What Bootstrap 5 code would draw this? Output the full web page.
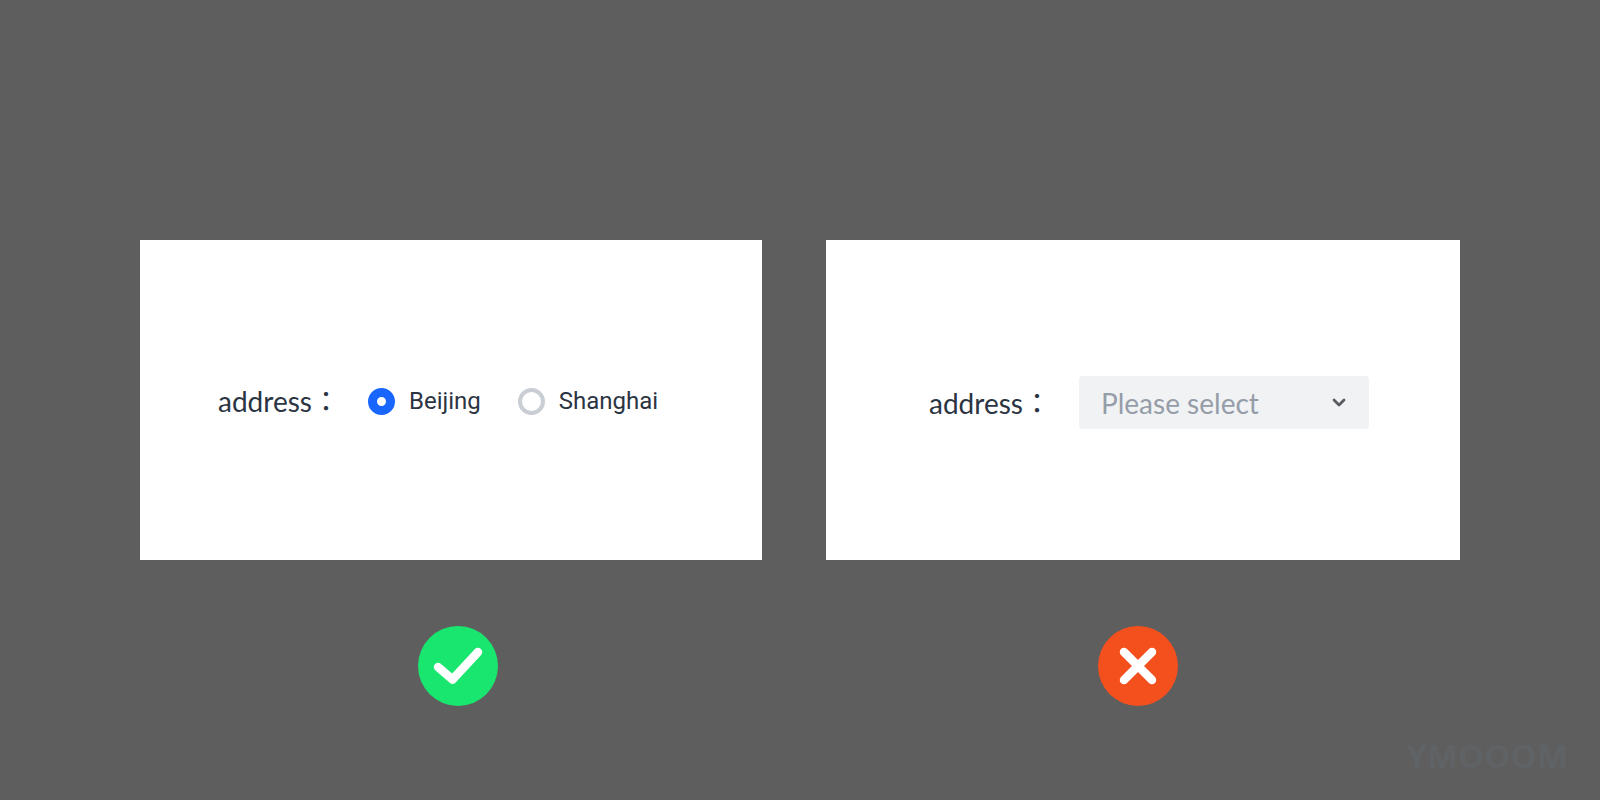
<!DOCTYPE html>
<html lang="en">
<head>
<meta charset="utf-8">
<meta name="viewport" content="width=device-width, initial-scale=1">
<title>Address field: radio or select</title>
<link href="https://cdn.jsdelivr.net/npm/bootstrap@5.3.0/dist/css/bootstrap.min.css" rel="stylesheet">
<style>
  body { background: #5e5e5e; color: #2b3442; font-family: "Open Sans", "Noto Sans CJK JP", sans-serif; }
  .compare { display: grid; grid-template-columns: 622fr 634fr; gap: 64px; padding: 240px 140px 0; }
  .panel { height: 320px; padding-top: 2px; }
  .panel-do { padding-left: 78px; }
  .panel-dont { padding-left: 103px; padding-top: 5px; }
  .field-label { width: 150px; font-family: Lato, "Noto Sans CJK JP", sans-serif; font-size: 28px; line-height: 40px; white-space: nowrap; }
  .choice { gap: 14px; margin-right: 37px; font-family: Roboto, sans-serif; font-size: 24px; line-height: 32px; }
  .choice .form-check-input { width: 27px; height: 27px; border: 4px solid #c9cdd4; box-shadow: none; }
  .choice .form-check-input:checked { border: 9px solid #1966ff; background: #fff; }
  .city-select { width: 290px; height: 53px; padding: 0 48px 0 22px; border: 0; border-radius: 4px; color: #959da8; font-family: Lato, sans-serif; font-size: 28px;
    background: #f1f2f4 url("data:image/svg+xml,%3Csvg xmlns='http://www.w3.org/2000/svg' viewBox='0 0 14 10'%3E%3Cpath d='M2 2l5 5 5-5' fill='none' stroke='%23575a5e' stroke-width='2.8' stroke-linecap='round' stroke-linejoin='round'/%3E%3C/svg%3E") no-repeat right 23px center / 14px 10px; }
  .verdict { width: 80px; height: 80px; margin-top: 66px; }
  .verdict-do { margin-left: 278px; }
  .verdict-dont { margin-left: 272px; }
  .watermark { color: #5f6365; font-size: 33px; line-height: 40px; font-weight: 700; padding: 30px 32px 0 0; }
</style>
</head>
<body>
<main class="compare">
  <section>
    <div class="panel panel-do bg-white d-flex align-items-center" role="radiogroup" aria-labelledby="address-label">
      <span class="field-label" id="address-label">address：</span>
      <div class="choice d-flex align-items-center">
        <input class="form-check-input m-0" type="radio" name="city" id="beijing" checked>
        <label for="beijing">Beijing</label>
      </div>
      <div class="choice d-flex align-items-center">
        <input class="form-check-input m-0" type="radio" name="city" id="shanghai">
        <label for="shanghai">Shanghai</label>
      </div>
    </div>
    <svg class="verdict verdict-do d-block" viewBox="0 0 80 80" role="img" aria-label="Recommended">
      <circle cx="40" cy="40" r="40" fill="#19e66e"/>
      <path d="M20 41l14.5 12.5L60 26" fill="none" stroke="#fff" stroke-width="8.5" stroke-linecap="round" stroke-linejoin="round"/>
    </svg>
  </section>
  <section>
    <div class="panel panel-dont bg-white d-flex align-items-center">
      <label class="field-label" for="city-select">address：</label>
      <select class="form-select city-select" id="city-select">
        <option selected>Please select</option>
        <option>Beijing</option>
        <option>Shanghai</option>
      </select>
    </div>
    <svg class="verdict verdict-dont d-block" viewBox="0 0 80 80" role="img" aria-label="Not recommended">
      <circle cx="40" cy="40" r="40" fill="#f4501e"/>
      <path d="M26 26l28 28M54 26L26 54" fill="none" stroke="#fff" stroke-width="8.5" stroke-linecap="round"/>
    </svg>
  </section>
</main>
<footer class="watermark text-end">YMOOOM</footer>
<script src="https://cdn.jsdelivr.net/npm/bootstrap@5.3.0/dist/js/bootstrap.bundle.min.js"></script>
</body>
</html>
